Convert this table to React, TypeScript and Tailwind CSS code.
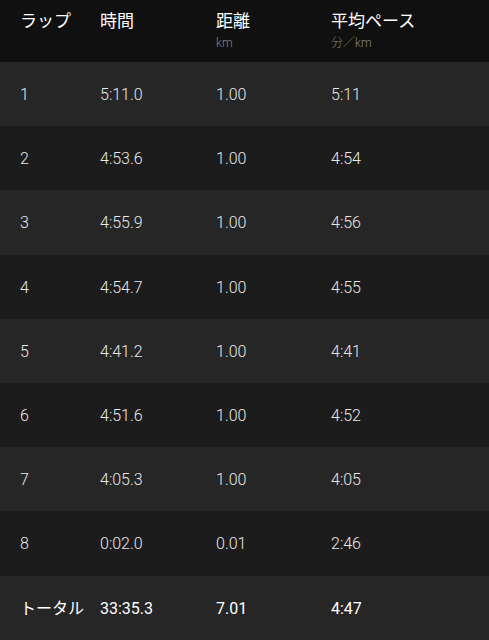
const laps = [
  { lap: "1", time: "5:11.0", dist: "1.00", pace: "5:11" },
  { lap: "2", time: "4:53.6", dist: "1.00", pace: "4:54" },
  { lap: "3", time: "4:55.9", dist: "1.00", pace: "4:56" },
  { lap: "4", time: "4:54.7", dist: "1.00", pace: "4:55" },
  { lap: "5", time: "4:41.2", dist: "1.00", pace: "4:41" },
  { lap: "6", time: "4:51.6", dist: "1.00", pace: "4:52" },
  { lap: "7", time: "4:05.3", dist: "1.00", pace: "4:05" },
  { lap: "8", time: "0:02.0", dist: "0.01", pace: "2:46" },
];

const font = { fontFamily: 'Roboto, "Noto Sans CJK JP", sans-serif' };

export default function App() {
  return (
    <div className="w-[489px] h-[640px] flex flex-col bg-[#1c1c1c] text-[#e8e8e8]" style={font}>
      {/* Header */}
      <div className="h-[62px] flex items-start pt-[9px] bg-[#101010] text-white">
        <div className="w-[100px] pl-[20px] text-[17px] leading-[24px]">ラップ</div>
        <div className="w-[116px] text-[17px] leading-[24px]">時間</div>
        <div className="w-[115px] flex flex-col">
          <span className="text-[17px] leading-[24px]">距離</span>
          <span className="mt-[2px] text-[12px] leading-[16px] text-[#888888] font-light">km</span>
        </div>
        <div className="flex flex-col">
          <span className="text-[17px] leading-[24px]">平均ペース</span>
          <span className="mt-[2px] text-[12px] leading-[16px] text-[#888888] font-light">分／km</span>
        </div>
      </div>

      {/* Laps */}
      {laps.map((r, i) => (
        <div
          key={r.lap}
          className={`h-[64.2px] pt-[2px] flex items-center text-[16px] font-light ${
            i % 2 === 0 ? "bg-[#262626]" : "bg-[#1c1c1c]"
          }`}
        >
          <div className="w-[100px] pl-[20px]">{r.lap}</div>
          <div className="w-[116px]">{r.time}</div>
          <div className="w-[115px]">{r.dist}</div>
          <div>{r.pace}</div>
        </div>
      ))}

      {/* Total */}
      <div className="flex-1 pt-[2px] flex items-center bg-[#262626] text-white text-[16px] font-normal">
        <div className="w-[100px] pl-[20px]">トータル</div>
        <div className="w-[116px]">33:35.3</div>
        <div className="w-[115px]">7.01</div>
        <div>4:47</div>
      </div>
    </div>
  );
}
